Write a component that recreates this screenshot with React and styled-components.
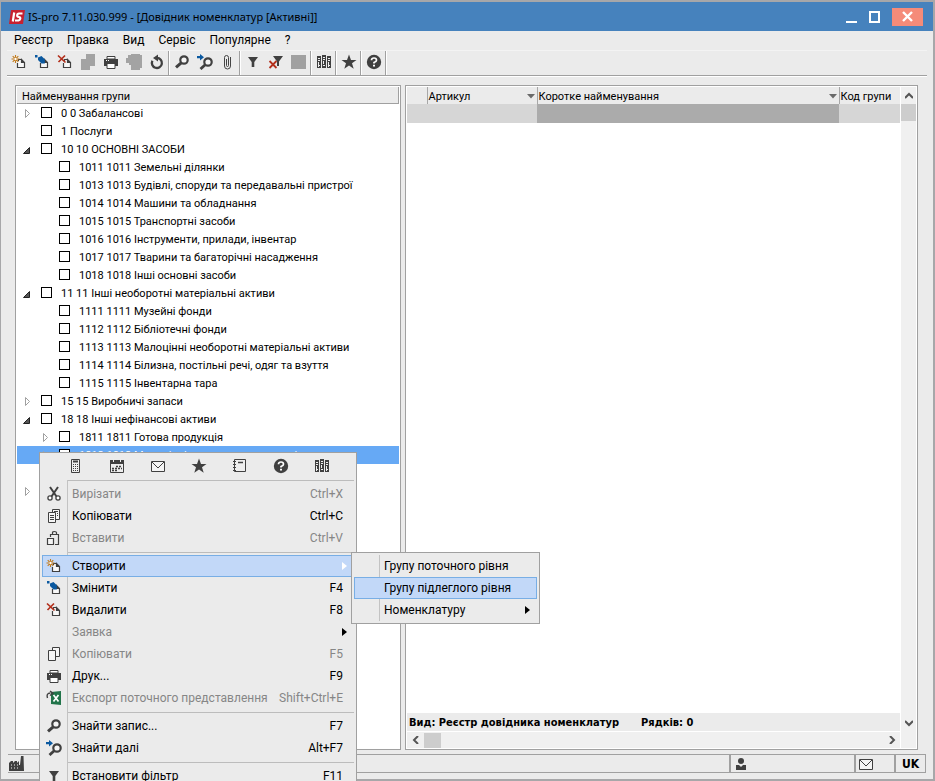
import React from "react";
import styled, { createGlobalStyle } from "styled-components";

const GlobalStyle = createGlobalStyle`
  * {
    box-sizing: border-box;
  }
  body {
    margin: 0;
    background-color: #ebebeb;
    color: #000;
    font-family: Roboto, "Noto Sans", sans-serif;
    font-size: 11px;
  }
  button {
    font: inherit;
    color: inherit;
    background: none;
    border: none;
    padding: 0;
  }
`;

const Screen = styled.div`
  position: relative;
  min-height: 100vh;
  display: flex;
  overflow: hidden;
`;
const Window = styled.div`
  flex: 1;
  min-width: 0;
  display: flex;
  flex-direction: column;
  background-color: #ebebeb;
  border: 2px solid #a7a7a9;
  border-left-width: 1px;
`;
const TitleBar = styled.header`
  height: 29px;
  display: flex;
  align-items: center;
  padding: 0 10px 0 8px;
  background-color: #4682bd;
`;
const Title = styled.h1`
  flex: 1;
  margin: 0 0 0 3px;
  font-family: "Noto Sans", sans-serif;
  font-size: 11px;
  font-weight: 400;
  white-space: nowrap;
`;
const WindowButton = styled.button`
  width: ${(p) => (p.$close ? "31px" : "23px")};
  height: 18px;
  margin-left: ${(p) => (p.$close ? "6px" : "0")};
  display: flex;
  align-items: center;
  justify-content: center;
  background-color: ${(p) => (p.$close ? "#f58b79" : "transparent")};
`;
const MenuBar = styled.nav`
  height: 20px;
  margin: 0 6px;
  display: flex;
  align-items: flex-start;
  border-bottom: 1px solid #f3f3f3;
`;
const MenuBarItem = styled.button`
  padding: 0 7px;
  font-size: 12px;
  line-height: 18px;
`;
const Toolbar = styled.div`
  height: 25px;
  margin: 0 6px;
  display: flex;
  border-bottom: 1px solid #a0a0a0;
  box-shadow: 0 1px #fff;
`;
const ToolGroup = styled.div`
  display: flex;
  border-right: 1px solid #a0a0a0;
  box-shadow: 1px 0 #fff;
  margin-right: 1px;
`;
const ToolButton = styled.button`
  width: 23px;
  padding: 3px 4px;
  display: flex;
`;
const Icon = styled.svg`
  width: 16px;
  height: 16px;
  flex: none;
`;

const Workspace = styled.main`
  flex: 1;
  display: flex;
  gap: 4px;
  padding: 9px 15px 4px 14px;
`;
const Panel = styled.section`
  flex: ${(p) => p.$grow} 1 0;
  min-width: 0;
  display: flex;
  border: 1px solid #a0a0a0;
  outline: 1px solid #fff;
  outline-offset: -2px;
  padding: 1px;
  background-color: #fff;
`;
const Tree = styled.div`
  flex: 1;
  min-width: 0;
`;
const TreeHeader = styled.div`
  height: 17px;
  padding: 1px 0 0 5px;
  line-height: 17px;
  background-color: #ebebeb;
  border-right: 1px solid #a0a0a0;
  border-bottom: 1px solid #a0a0a0;
`;
const TreeList = styled.ul`
  list-style: none;
  margin: 0;
  padding: 0;
`;
const TreeRow = styled.li`
  height: 18px;
  display: flex;
  align-items: center;
  padding-left: ${(p) => 4 + p.$level * 18}px;
  background-color: ${(p) => (p.$selected ? "#66a9f5" : "transparent")};
  color: ${(p) => (p.$selected ? "#fff" : "#000")};
`;
const Expander = styled.button`
  width: 12px;
  height: 12px;
  display: flex;
  margin-right: 8px;
`;
const RowLabel = styled.label`
  display: flex;
  align-items: center;
  white-space: nowrap;
`;
const CheckBox = styled.input`
  appearance: none;
  width: 11px;
  height: 11px;
  margin: 0 9px 1px 0;
  border: 1px solid #000;
  background-color: #fff;
`;

const GridArea = styled.div`
  flex: 1;
  min-width: 0;
  display: flex;
  flex-direction: column;
`;
const Table = styled.table`
  width: 100%;
  table-layout: fixed;
  border-collapse: collapse;
`;
const HeadCell = styled.th`
  height: 17px;
  padding: 1px 2px 0 1px;
  font-weight: 400;
  text-align: left;
  white-space: nowrap;
  background-color: #ebebeb;
  border-left: ${(p) => (p.$first ? "none" : "1px solid #a7a7a7")};
`;
const HeadContent = styled.span`
  display: flex;
  align-items: center;
  justify-content: space-between;
`;
const Cell = styled.td`
  height: 19px;
  padding: 0;
  background-color: ${(p) => (p.$active ? "#ababab" : "#d6d6d6")};
`;
const Summary = styled.div`
  height: 18px;
  margin-top: auto;
  display: flex;
  align-items: center;
  gap: 22px;
  padding-left: 2px;
  background-color: #ebebeb;
  font-family: "DejaVu Sans Condensed", "Noto Sans", sans-serif;
  font-weight: 700;
`;
const ScrollX = styled.div`
  height: 16px;
  margin-top: 1px;
  display: flex;
  align-items: center;
  background-color: #f0f0f0;
`;
const ScrollY = styled.div`
  width: 15px;
  margin-left: 1px;
  display: flex;
  flex-direction: column;
  background-color: #f0f0f0;
`;
const ScrollButton = styled.button`
  width: ${(p) => (p.$wide ? "17px" : "15px")};
  height: 17px;
  display: flex;
  align-items: center;
  justify-content: center;
`;
const Thumb = styled.div`
  width: ${(p) => (p.$vertical ? "15px" : "17px")};
  height: ${(p) => (p.$vertical ? "17px" : "15px")};
  background-color: #cdcdcd;
`;
const Spacer = styled.div`
  flex: 1;
`;
const Corner = styled.div`
  height: 17px;
`;

const StatusBar = styled.footer`
  display: flex;
  height: 19px;
  margin: 0 7px 6px 7px;
  border: 1px solid #a0a0a0;
  border-left: none;
`;
const StatusCell = styled.div`
  flex: ${(p) => (p.$width ? `0 0 ${p.$width}px` : "1")};
  display: flex;
  align-items: center;
  padding-left: ${(p) => (p.$width ? "2px" : "0")};
  border-left: ${(p) => (p.$width ? "2px solid #a0a0a0" : "none")};
  font-family: "DejaVu Sans Condensed", "Noto Sans", sans-serif;
  font-size: 12px;
  font-weight: 700;
`;
const Language = styled.span`
  padding-left: 4px;
`;

const Popup = styled.div`
  position: absolute;
  z-index: 2;
  left: ${(p) => p.$left}px;
  top: ${(p) => p.$top}px;
  width: ${(p) => p.$width}px;
  padding: 2px;
  background-color: #ebebeb;
  border: 1px solid #a0a0a0;
  font-size: 12px;
`;
const QuickIcons = styled.div`
  height: 22px;
  display: flex;
  padding-left: 14px;
`;
const QuickButton = styled.button`
  width: 41px;
  padding: 3px 12px;
  display: flex;
`;
const MenuBody = styled.div`
  background: linear-gradient(#c3c3c3, #c3c3c3) 25px 0 / 1px 100% no-repeat;
`;
const ItemWrap = styled.div`
  position: relative;
`;
const MenuItem = styled.button`
  width: 100%;
  height: 22px;
  display: flex;
  align-items: center;
  padding-right: 3px;
  white-space: nowrap;
  border: 1px solid ${(p) => (p.$active ? "#78aee5" : "transparent")};
  background-color: ${(p) => (p.$active ? "#c2d8f8" : "transparent")};
  &:disabled {
    color: #868686;
  }
`;
const ItemIcon = styled.span`
  width: 22px;
  height: 16px;
  margin-right: 7px;
  display: flex;
  justify-content: center;
`;
const ItemText = styled.span`
  flex: 1;
  text-align: left;
`;
const Shortcut = styled.span`
  padding-right: 7px;
`;
const ArrowSlot = styled.span`
  display: flex;
  padding-right: 3px;
`;
const Divider = styled.hr`
  height: 1px;
  margin: 3px 0 2px 26px;
  border: none;
  background-color: #bcbcbc;
`;

const DARK = "#404040";

const SheetShape = () => (
  <path
    d="M10.5 5.5H7.5V7M6.5 9V13.5H13.5V8.5L10.5 5.5V8.5H13.5"
    fill="none"
    stroke={DARK}
    strokeWidth="1.2"
  />
);

const glyphs = {
  create: (
    <>
      <path d="M7 6H11L14 9V14H7Z" fill="#f8f8f8" />
      <SheetShape />
      <path d="M4.5 1V9M.5 5H8.5M1.7 2.2L7.3 7.8M7.3 2.2L1.7 7.8" stroke="#c27a1a" strokeWidth="1.1" />
      <circle cx="4.5" cy="5" r="1.2" fill="#fff" />
    </>
  ),
  edit: (
    <>
      <path d="M7 6H11L14 9V14H7Z" fill="#f8f8f8" />
      <SheetShape />
      <path d="M4 3.5L7.5 2L10.8 5.2V9.5H7.5L4 6Z" fill="#0b59a0" />
      <path d="M1 1H3.5V3.5H1Z" fill="#0b59a0" />
    </>
  ),
  remove: (
    <>
      <path d="M7 6H11L14 9V14H7Z" fill="#f8f8f8" />
      <SheetShape />
      <path d="M1 1.5L8.5 8.5M8 1.5L1.5 8" stroke="#b3301c" strokeWidth="1.7" />
    </>
  ),
  copyOff: <path d="M6 0H15V12H10V16H1V5H6Z" fill="#a3a3a3" />,
  pasteOff: <path d="M2 1H5V0H14V1H16V14H14V16H5V11H3V9H0V4H2Z" fill="#a3a3a3" />,
  squareOff: <path d="M0 1H15V15H0Z" fill="#a0a0a0" />,
  print: (
    <>
      <path d="M4 2.5H12V5H4Z" fill="#fff" stroke={DARK} />
      <path d="M1 5H15V12H1Z" fill={DARK} />
      <path d="M4 9.5H12V14.5H4Z" fill="#fff" stroke={DARK} />
      <path d="M3 6.5H4M5 6.5H6" stroke="#fff" />
    </>
  ),
  refresh: (
    <>
      <path d="M3.4 6.8A5 5 0 1 0 8 4" fill="none" stroke={DARK} strokeWidth="2.3" />
      <path d="M9 .5V7.5L4 4Z" fill={DARK} />
    </>
  ),
  search: (
    <>
      <circle cx="10" cy="6" r="3.7" fill="#f5f5f5" stroke={DARK} strokeWidth="2.2" />
      <path d="M7.2 8.8L2 13.4" stroke={DARK} strokeWidth="3" />
    </>
  ),
  searchNext: (
    <>
      <circle cx="11" cy="8" r="3.7" fill="#f5f5f5" stroke={DARK} strokeWidth="2.2" />
      <path d="M8.2 10.8L3.5 15" stroke={DARK} strokeWidth="2.8" />
      <path d="M0 2H3V0L7 3.2L3 6.5V4.3H0Z" fill="#0b59a0" />
    </>
  ),
  clip: (
    <path
      d="M6.5 5V11.5Q6.5 12.5 7.5 12.5T8.5 11.5V3.5Q8.5 1.5 6.5 1.5T4.5 3.5V12Q4.5 15 7.5 15T10.5 12V3"
      fill="none"
      stroke="#444"
    />
  ),
  filter: <path d="M3 3H13L9.3 8V13H6.7V8Z" fill={DARK} />,
  filterOff: (
    <>
      <path d="M5 2H15L11 7.5V12H9V7.5Z" fill={DARK} />
      <path d="M1.5 7L8.5 14M8.5 7L1.5 14" stroke="#b3301c" strokeWidth="1.8" />
    </>
  ),
  binders: (
    <>
      <path d="M1 2H5V14H1ZM6 1H10V14H6ZM11 2H15V14H11Z" fill={DARK} />
      <path d="M2 4.5H4M2 6.5H4M7 3.5H9M7 5.5H9M12 4.5H14M12 6.5H14" stroke="#eee" />
      <path d="M2.5 8V13M7.5 7V10M12.5 8V13M2 11.5H4M7 11.5H9M12 11.5H14" stroke="#eee" />
    </>
  ),
  star: <path d="M8 .5L10 6H15.5L11 9.3L12.7 14.7L8 11.4L3.3 14.7L5 9.3L.5 6H6Z" fill={DARK} />,
  help: (
    <>
      <circle cx="8" cy="8" r="7.2" fill={DARK} />
      <path d="M5.5 6.3Q5.5 4 8 4T10.5 6.2Q10.5 7.5 8 8.5V9.6" fill="none" stroke="#fff" strokeWidth="1.7" />
      <path d="M7 10.7H9V12.5H7Z" fill="#fff" />
    </>
  ),
  calculator: (
    <>
      <path d="M3.5 1.5H11.5V14.5H3.5Z" fill="#eee" stroke={DARK} />
      <path d="M5 3.5H10" stroke={DARK} strokeWidth="2" />
      <path d="M5 6.5H10M5 8.5H10M5 10.5H10M5 12.5H10" stroke={DARK} strokeDasharray="1 1" />
    </>
  ),
  calendar: (
    <>
      <path d="M1.5 2.5H14.5V14.5H1.5Z" fill="#eee" stroke={DARK} />
      <path d="M1 2H15V6H1Z" fill={DARK} />
      <path d="M4.5 1V4M11.5 1V4" stroke="#eee" />
      <path d="M7 8.5H13M3 10.5H13M3 12.5H9" stroke={DARK} strokeWidth="1.4" strokeDasharray="2 1" />
    </>
  ),
  mail: (
    <>
      <path d="M1.5 3.5H14.5V13.5H1.5Z" fill="#f5f5f5" stroke={DARK} />
      <path d="M2 4L8 10L14 4" fill="none" stroke={DARK} />
    </>
  ),
  notebook: (
    <>
      <path d="M2.5 1.5H13.5V13.5H2.5Z" fill="#eee" stroke={DARK} />
      <path d="M6 4.5H11" stroke={DARK} strokeWidth="1.5" />
      <path d="M1 3.5H4M1 6.5H4M1 9.5H4M1 12.5H4" stroke={DARK} />
    </>
  ),
  cut: (
    <>
      <path d="M4 1L10.5 10.5M12 1L5.5 10.5" stroke={DARK} strokeWidth="2" />
      <circle cx="4" cy="12" r="2.1" fill="#fff" stroke={DARK} strokeWidth="1.3" />
      <circle cx="12" cy="12" r="2.1" fill="#fff" stroke={DARK} strokeWidth="1.3" />
    </>
  ),
  copyText: (
    <>
      <path d="M6.5 1.5H13.5V11.5H6.5Z" fill="#f5f5f5" stroke={DARK} />
      <path d="M2.5 4.5H9.5V14.5H2.5Z" fill="#f5f5f5" stroke={DARK} />
      <path d="M8 3.5H12M11 5.5H12M11 7.5H12M4 7.5H8M4 9.5H8M4 11.5H8" stroke={DARK} />
    </>
  ),
  paste: (
    <>
      <path d="M4.5 7V4.5H12.5V14.5H9" fill="none" stroke={DARK} strokeWidth="1.2" />
      <path d="M6.5 4V2.5Q6.5 1.5 8.5 1.5T10.5 2.5V4" fill="none" stroke={DARK} strokeWidth="1.2" />
      <path d="M1.5 8.5H7.5V14.5H1.5Z" fill="#f5f5f5" stroke={DARK} strokeWidth="1.2" />
    </>
  ),
  copyRecord: (
    <>
      <path d="M6.5 1.5H13.5V10.5H6.5Z" fill="#f5f5f5" stroke={DARK} />
      <path d="M2.5 4.5H9.5V14.5H2.5Z" fill="#f5f5f5" stroke={DARK} />
    </>
  ),
  excel: (
    <>
      <path d="M5 2L15 1V15L5 14Z" fill="#21744a" />
      <path d="M7.5 5L12.5 11.5M12.5 5L7.5 11.5" stroke="#fff" strokeWidth="1.7" />
      <path d="M1.5 8Q0 3 4.5 3M4 1L7 3.2L4 5.5" fill="none" stroke={DARK} strokeWidth="1.4" />
    </>
  ),
  factory: (
    <>
      <path d="M1 15V7L3 5H5V7L7 5H9V7L11 5V9H12L13 0H15.5L16 15Z" fill={DARK} />
      <path d="M3.5 8V13M6.5 8V13M9.5 8V13" stroke="#999" strokeDasharray="2 1" />
    </>
  ),
  user: (
    <>
      <circle cx="8" cy="5" r="3" fill={DARK} />
      <path d="M3 9H6L8 11L10 9H13V14H3Z" fill={DARK} />
    </>
  ),
};

const Glyph = ({ name }) => (
  <Icon viewBox="0 0 16 16" aria-hidden="true">
    {glyphs[name]}
  </Icon>
);

const Chevron = ({ d }) => (
  <svg width="8" height="8" viewBox="0 0 8 8" aria-hidden="true">
    <path d={d} fill="none" stroke="#555" strokeWidth="2" />
  </svg>
);

const SortMark = () => (
  <svg width="8" height="5" viewBox="0 0 8 5" aria-hidden="true">
    <path d="M0 0H8L4 4.5Z" fill="#6a6a6a" />
  </svg>
);

const SubArrow = ({ color }) => (
  <svg width="5" height="8" viewBox="0 0 5 8" aria-hidden="true">
    <path d="M0 0L5 4L0 8Z" fill={color} />
  </svg>
);

const menus = ["Реєстр", "Правка", "Вид", "Сервіс", "Популярне", "?"];

const tools = [
  ["create", "edit", "remove", "copyOff", "print", "pasteOff", "refresh"],
  ["search", "searchNext", "clip"],
  ["filter", "filterOff", "squareOff"],
  ["binders"],
  ["star"],
  ["help"],
];

const groups = [
  { text: "0 0 Забалансові", level: 0, state: "closed" },
  { text: "1 Послуги", level: 0 },
  { text: "10 10 ОСНОВНІ ЗАСОБИ", level: 0, state: "open" },
  { text: "1011 1011 Земельні ділянки", level: 1 },
  { text: "1013 1013 Будівлі, споруди та передавальні пристрої", level: 1 },
  { text: "1014 1014 Машини та обладнання", level: 1 },
  { text: "1015 1015 Транспортні засоби", level: 1 },
  { text: "1016 1016 Інструменти, прилади, інвентар", level: 1 },
  { text: "1017 1017 Тварини та багаторічні насадження", level: 1 },
  { text: "1018 1018 Інші основні засоби", level: 1 },
  { text: "11 11 Інші необоротні матеріальні активи", level: 0, state: "open" },
  { text: "1111 1111 Музейні фонди", level: 1 },
  { text: "1112 1112 Бібліотечні фонди", level: 1 },
  { text: "1113 1113 Малоцінні необоротні матеріальні активи", level: 1 },
  { text: "1114 1114 Білизна, постільні речі, одяг та взуття", level: 1 },
  { text: "1115 1115 Інвентарна тара", level: 1 },
  { text: "15 15 Виробничі запаси", level: 0, state: "closed" },
  { text: "18 18 Інші нефінансові активи", level: 0, state: "open" },
  { text: "1811 1811 Готова продукція", level: 1, state: "closed" },
  { text: "1812 1812 Малоцінні та швидкозношувані предмети", level: 1, state: "closed", selected: true },
  { text: "", level: 1 },
  { text: "", level: 0, state: "closed" },
];

const quick = ["calculator", "calendar", "mail", "star", "notebook", "help", "binders"];

const contextItems = [
  { divider: true },
  { text: "Вирізати", keys: "Ctrl+X", icon: "cut", disabled: true },
  { text: "Копіювати", keys: "Ctrl+C", icon: "copyText" },
  { text: "Вставити", keys: "Ctrl+V", icon: "paste", disabled: true },
  { divider: true },
  {
    text: "Створити",
    icon: "create",
    active: true,
    arrow: "#fff",
    submenu: [
      { text: "Групу поточного рівня" },
      { text: "Групу підлеглого рівня", active: true },
      { text: "Номенклатуру", arrow: "#000" },
    ],
  },
  { text: "Змінити", keys: "F4", icon: "edit" },
  { text: "Видалити", keys: "F8", icon: "remove" },
  { text: "Заявка", arrow: "#000", disabled: true },
  { text: "Копіювати", keys: "F5", icon: "copyRecord", disabled: true },
  { text: "Друк...", keys: "F9", icon: "print" },
  { text: "Експорт поточного представлення", keys: "Shift+Ctrl+E", icon: "excel", disabled: true },
  { divider: true },
  { text: "Знайти запис...", keys: "F7", icon: "search" },
  { text: "Знайти далі", keys: "Alt+F7", icon: "searchNext" },
  { divider: true },
  { text: "Встановити фільтр", keys: "F11", icon: "filter" },
];

const MenuItems = ({ items }) => (
  <MenuBody>
    {items.map((item, i) =>
      item.divider ? (
        <Divider key={i} />
      ) : (
        <ItemWrap key={i}>
          <MenuItem $active={item.active} disabled={item.disabled}>
            <ItemIcon>{item.icon && <Glyph name={item.icon} />}</ItemIcon>
            <ItemText>{item.text}</ItemText>
            {item.keys && <Shortcut>{item.keys}</Shortcut>}
            {item.arrow && (
              <ArrowSlot>
                <SubArrow color={item.arrow} />
              </ArrowSlot>
            )}
          </MenuItem>
          {item.submenu && (
            <Popup $left={309} $top={-3} $width={189}>
              <MenuItems items={item.submenu} />
            </Popup>
          )}
        </ItemWrap>
      )
    )}
  </MenuBody>
);

const TreeItem = ({ group }) => (
  <TreeRow $level={group.level} $selected={group.selected}>
    <Expander aria-label="Розгорнути">
      {group.state === "closed" && (
        <svg width="12" height="12" viewBox="0 0 12 12">
          <path d="M4.5 2.5L8.5 6.5L4.5 10.5Z" fill="#fff" stroke="#a0a0a0" />
        </svg>
      )}
      {group.state === "open" && (
        <svg width="12" height="12" viewBox="0 0 12 12">
          <path d="M2.5 10.5H8.5V4.5Z" fill="#555" stroke="#222" />
        </svg>
      )}
    </Expander>
    {group.text && (
      <RowLabel>
        <CheckBox type="checkbox" />
        {group.text}
      </RowLabel>
    )}
  </TreeRow>
);

const App = () => {
  return (
    <Screen>
      <GlobalStyle />
      <Window>
        <TitleBar>
          <svg width="16" height="14" viewBox="0 0 16 14" aria-hidden="true">
            <path d="M2 0H16L14 14H0Z" fill="#c8202f" />
            <path
              d="M5.2 2.5L3.8 11.5M13.5 3.5H10Q8.3 3.5 8.2 5.2T9.8 7Q11.5 7.2 11.3 8.7T9.5 10.5H6"
              fill="none"
              stroke="#fff"
              strokeWidth="2.2"
            />
          </svg>
          <Title>IS-pro 7.11.030.999 - [Довідник номенклатур [Активні]]</Title>
          <WindowButton aria-label="Згорнути">
            <svg width="11" height="12"><path d="M0 11H11" stroke="#fff" strokeWidth="2" /></svg>
          </WindowButton>
          <WindowButton aria-label="Розгорнути вікно">
            <svg width="11" height="12"><path d="M1 1H10V11H1Z" fill="none" stroke="#fff" strokeWidth="2" /></svg>
          </WindowButton>
          <WindowButton $close aria-label="Закрити">
            <svg width="11" height="11"><path d="M1 1L10 10M10 1L1 10" stroke="#fff" strokeWidth="2.4" /></svg>
          </WindowButton>
        </TitleBar>
        <MenuBar>
          {menus.map((menu) => (
            <MenuBarItem key={menu}>{menu}</MenuBarItem>
          ))}
        </MenuBar>
        <Toolbar>
          {tools.map((set, i) => (
            <ToolGroup key={i}>
              {set.map((name) => (
                <ToolButton key={name} aria-label={name}>
                  <Glyph name={name} />
                </ToolButton>
              ))}
            </ToolGroup>
          ))}
        </Toolbar>
        <Workspace>
          <Panel $grow={382}>
            <Tree>
              <TreeHeader>Найменування групи</TreeHeader>
              <TreeList>
                {groups.map((group, i) => (
                  <TreeItem key={i} group={group} />
                ))}
              </TreeList>
            </Tree>
          </Panel>
          <Panel $grow={509}>
            <GridArea>
              <Table>
                <colgroup>
                  <col width="20" />
                  <col width="110" />
                  <col />
                  <col width="61" />
                </colgroup>
                <thead>
                  <tr>
                    <HeadCell $first />
                    <HeadCell><HeadContent>Артикул<SortMark /></HeadContent></HeadCell>
                    <HeadCell><HeadContent>Коротке найменування<SortMark /></HeadContent></HeadCell>
                    <HeadCell>Код групи</HeadCell>
                  </tr>
                </thead>
                <tbody>
                  <tr>
                    <Cell />
                    <Cell />
                    <Cell $active />
                    <Cell />
                  </tr>
                </tbody>
              </Table>
              <Summary>
                <span>Вид: Реєстр довідника номенклатур</span>
                <span>Рядків: 0</span>
              </Summary>
              <ScrollX>
                <ScrollButton $wide aria-label="Ліворуч"><Chevron d="M6 0L2 4L6 8" /></ScrollButton>
                <Thumb />
                <Spacer />
                <ScrollButton $wide aria-label="Праворуч"><Chevron d="M2 0L6 4L2 8" /></ScrollButton>
              </ScrollX>
            </GridArea>
            <ScrollY>
              <ScrollButton aria-label="Вгору"><Chevron d="M0 6L4 2L8 6" /></ScrollButton>
              <Thumb $vertical />
              <Spacer />
              <ScrollButton aria-label="Вниз"><Chevron d="M0 2L4 6L8 2" /></ScrollButton>
              <Corner />
            </ScrollY>
          </Panel>
        </Workspace>
        <StatusBar>
          <StatusCell><Glyph name="factory" /></StatusCell>
          <StatusCell $width={125}><Glyph name="user" /></StatusCell>
          <StatusCell $width={40}><Glyph name="mail" /></StatusCell>
          <StatusCell $width={31}><Language>UK</Language></StatusCell>
        </StatusBar>
      </Window>
      <Popup $left={39} $top={452} $width={318}>
        <QuickIcons>
          {quick.map((name) => (
            <QuickButton key={name} aria-label={name}>
              <Glyph name={name} />
            </QuickButton>
          ))}
        </QuickIcons>
        <MenuItems items={contextItems} />
      </Popup>
    </Screen>
  );
};

export default App;
